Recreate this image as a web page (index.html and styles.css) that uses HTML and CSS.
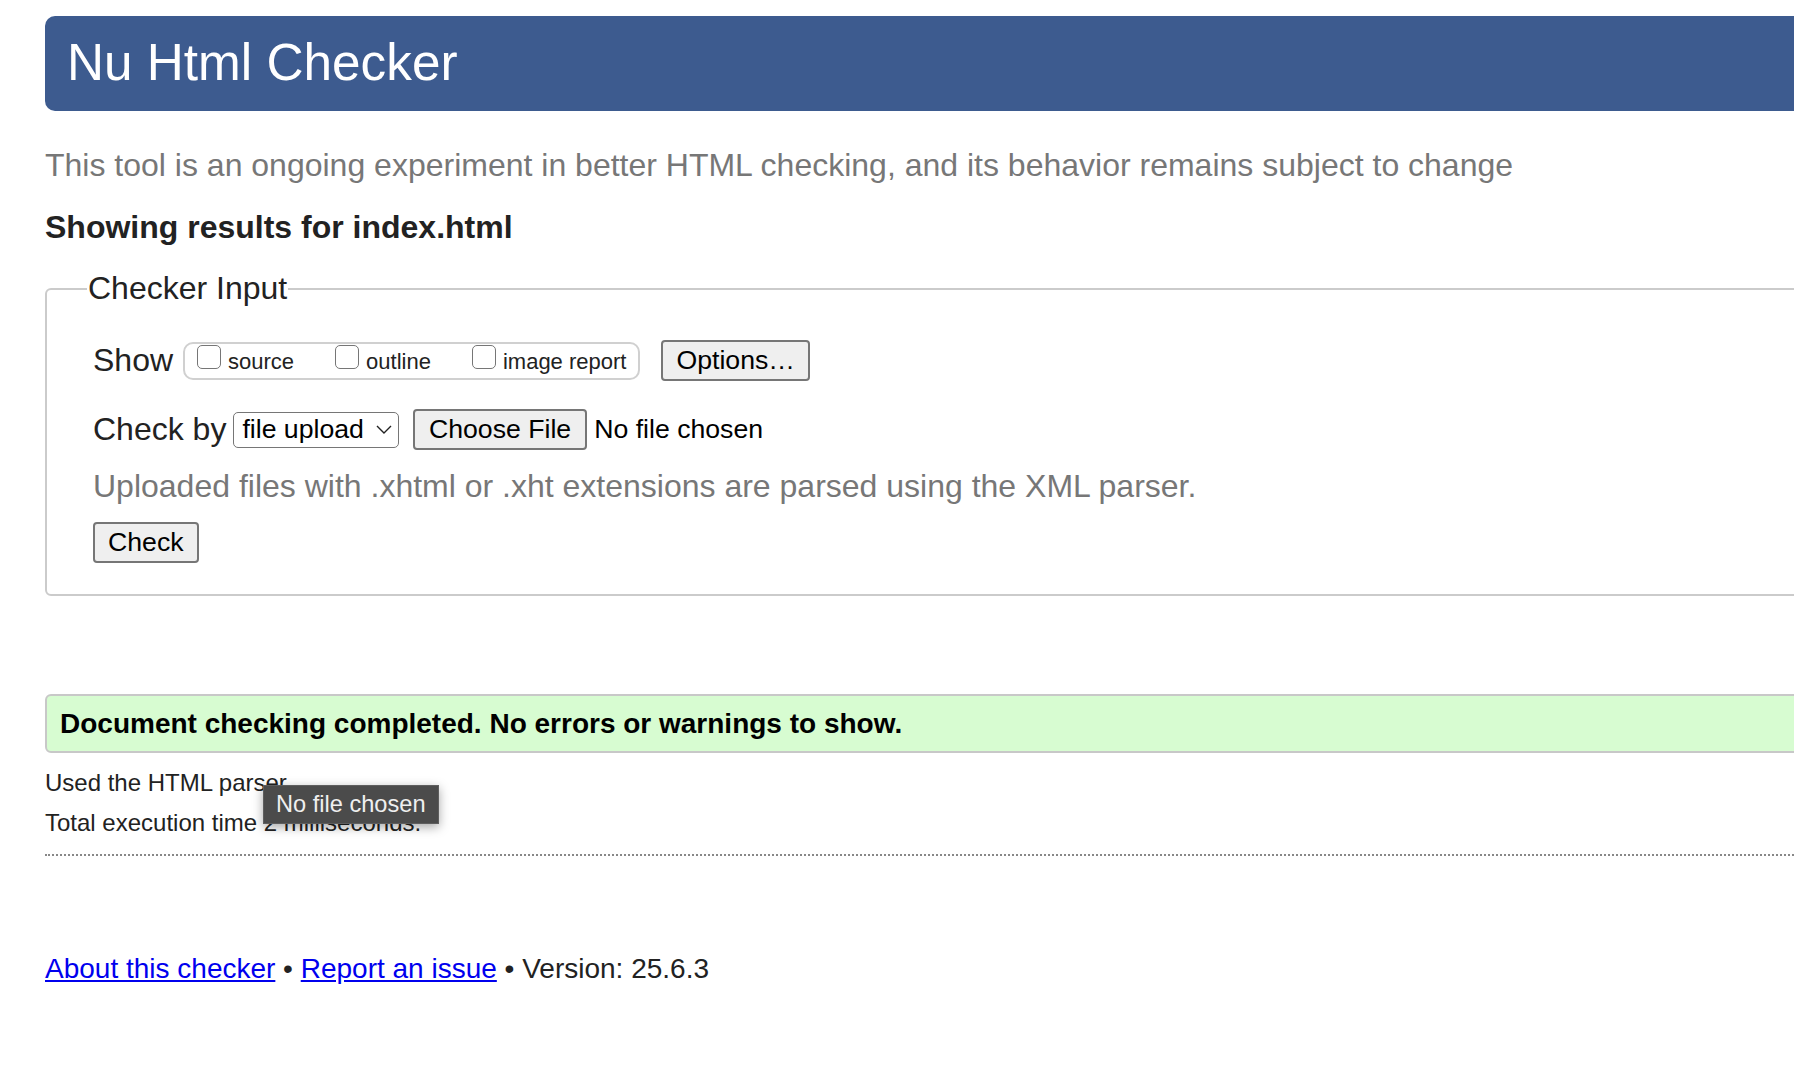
FILE: index.html
```html
<!DOCTYPE html>
<html lang="en">
<head>
<meta charset="utf-8">
<title>Showing results for index.html - Nu Html Checker</title>
<link rel="stylesheet" href="styles.css">
</head>
<body>
<div class="page">
  <h1 class="title">Nu Html Checker</h1>
  <p class="lede">This tool is an ongoing experiment in better HTML checking, and its behavior remains subject to change</p>
  <h2 class="results">Showing results for index.html</h2>

  <fieldset class="input">
    <legend class="legend">Checker Input</legend>
    <div class="row row-show">
      <span class="lbl">Show</span>
      <div class="show-group">
        <label class="opt"><input type="checkbox" class="cb">source</label>
        <label class="opt"><input type="checkbox" class="cb">outline</label>
        <label class="opt"><input type="checkbox" class="cb">image report</label>
      </div>
      <button class="btn btn-options" type="button">Options…</button>
    </div>
    <div class="row row-by">
      <span class="lbl">Check by</span>
      <div class="select">
        <span class="select-text">file upload</span>
        <svg class="chev" width="16" height="9" viewBox="0 0 16 9"><polyline points="1,1 8,8 15,1" fill="none" stroke="#222" stroke-width="1.4"/></svg>
      </div>
      <button class="btn btn-file" type="button">Choose File</button>
      <span class="nofile">No file chosen</span>
    </div>
    <p class="hint">Uploaded files with .xhtml or .xht extensions are parsed using the XML parser.</p>
    <button class="btn btn-check" type="button">Check</button>
  </fieldset>

  <div class="success">Document checking completed. No errors or warnings to show.</div>
  <p class="info info-first">Used the HTML parser.</p>
  <p class="info">Total execution time 2 milliseconds.</p>
  <div class="rule"></div>
  <p class="footer"><a href="#">About this checker</a> • <a href="#">Report an issue</a> • Version: 25.6.3</p>
</div>
<div class="tooltip">No file chosen</div>
</body>
</html>
```

FILE: styles.css
```css
html, body {
  overflow: hidden;
}
body {
  margin: 0;
  font-family: "Liberation Sans", Arial, Helvetica, sans-serif;
  color: #222;
  background: #fff;
  position: relative;
  min-height: 1088px;
}
.page {
  margin-left: 45px;
  width: 1800px;
  padding-top: 16px;
}
.title {
  margin: 0;
  height: 95px;
  line-height: 93px;
  padding-left: 22px;
  background: #3d5b8f;
  color: #fff;
  font-size: 51.3px;
  font-weight: normal;
  border-radius: 10px 0 0 10px;
}
.lede {
  margin: 36px 0 0;
  font-size: 32px;
  color: #777;
}
.results {
  margin: 25px 0 0;
  font-size: 32px;
  font-weight: bold;
  color: #222;
}
.input {
  margin: 24px 0 0;
  padding: 0 0 31px 40px;
  border: 2px solid #cbcbcb;
  border-radius: 6px;
  min-inline-size: 0;
}
.legend {
  padding: 0 1px;
  font-size: 32px;
  color: #222;
}
.row {
  display: flex;
  align-items: center;
  height: 41px;
  margin-left: 6px;
}
.row-show {
  margin-top: 33px;
}
.row-by {
  margin-top: 28px;
}
.lbl {
  font-size: 32px;
  color: #222;
}
.row-show .lbl {
  margin-right: 10px;
}
.show-group {
  display: flex;
  align-items: flex-start;
  box-sizing: border-box;
  height: 38px;
  padding: 1px 12px 0;
  border: 2px solid #d0d0d0;
  border-radius: 10px;
  gap: 41px;
}
.opt {
  display: flex;
  align-items: baseline;
  font-size: 22px;
  color: #222;
}
.cb {
  -webkit-appearance: none;
  appearance: none;
  box-sizing: border-box;
  width: 24px;
  height: 24px;
  margin: 0 7px 0 0;
  border: 1.5px solid #767676;
  border-radius: 5px;
  background: #fff;
}
.btn {
  box-sizing: border-box;
  height: 41px;
  padding: 0 13px;
  border: 2px solid #767676;
  border-radius: 4px;
  background: #efefef;
  color: #000;
  font-family: "Liberation Sans", Arial, Helvetica, sans-serif;
  font-size: 26.67px;
}
.btn-options {
  margin-left: 21px;
}
.select {
  display: flex;
  align-items: center;
  box-sizing: border-box;
  height: 36px;
  margin-left: 7px;
  padding: 0 6px 0 8px;
  border: 1.5px solid #767676;
  border-radius: 5px;
  background: #fff;
  font-size: 26.67px;
  color: #000;
}
.chev {
  margin-left: 12px;
}
.btn-file {
  margin-left: 14px;
  padding: 0 14px;
}
.nofile {
  margin-left: 7px;
  font-size: 26.67px;
  color: #000;
}
.hint {
  margin: 18px 0 0 6px;
  font-size: 32px;
  color: #777;
}
.btn-check {
  display: block;
  margin: 17px 0 0 6px;
}
.success {
  margin-top: 98px;
  box-sizing: border-box;
  height: 59px;
  line-height: 55px;
  padding-left: 13px;
  background: #d7fcd1;
  border: 2px solid #c8c8c8;
  border-radius: 6px 0 0 6px;
  font-size: 28px;
  font-weight: bold;
  color: #000;
}
.info {
  margin: 12px 0 0;
  font-size: 24px;
  color: #222;
}
.info-first {
  margin-top: 16px;
}
.rule {
  margin-top: 17px;
  border-top: 2px dotted #888;
}
.footer {
  margin: 97px 0 0;
  font-size: 28px;
  color: #222;
}
.footer a {
  color: #0000ee;
  text-decoration: underline;
}
.tooltip {
  position: absolute;
  left: 263px;
  top: 785px;
  box-sizing: border-box;
  height: 39px;
  line-height: 37px;
  padding: 0 12px;
  background: #4b4b4b;
  border: 1px solid #5e5e5e;
  color: #efefef;
  font-size: 23.6px;
  box-shadow: 0 3px 10px rgba(0, 0, 0, 0.35);
}
```
